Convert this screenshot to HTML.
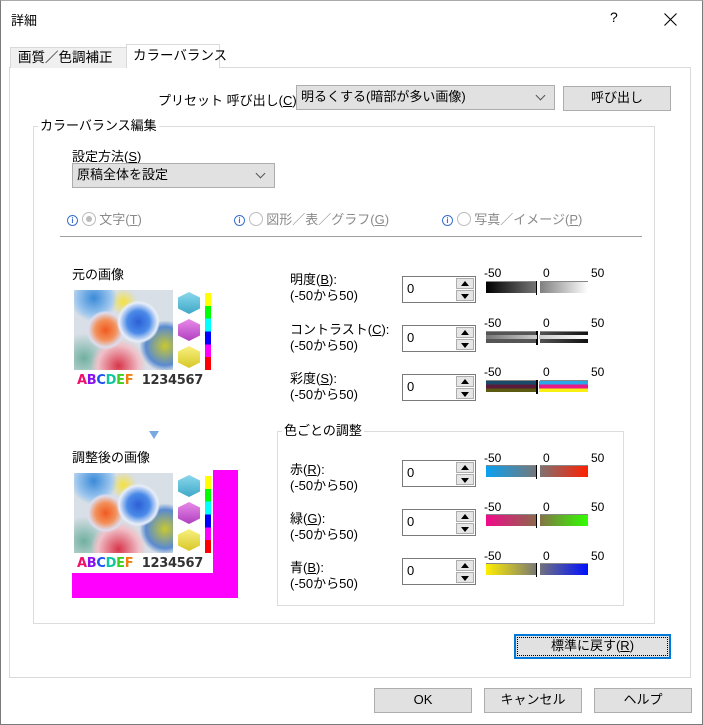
<!DOCTYPE html>
<html><head><meta charset="utf-8"><style>
*{box-sizing:border-box;margin:0;padding:0}
body{width:703px;height:725px;background:#fff;font-family:"Liberation Sans","Noto Sans CJK JP",sans-serif;font-size:13px;color:#000;position:relative;overflow:hidden}
.a{position:absolute;white-space:nowrap}
.btn{position:absolute;background:#e1e1e1;border:1px solid #adadad;text-align:center;line-height:22px;font-size:13px}
.combo{position:absolute;background:#e1e1e1;border:1px solid #adadad;padding-left:4px;line-height:22px}
.combo:after{content:"";position:absolute;right:10px;top:6px;width:6px;height:6px;border-right:1px solid #555;border-bottom:1px solid #555;transform:rotate(45deg)}
.grp{position:absolute;border:1px solid #dcdcdc}
.leg{position:absolute;background:#fff;padding:0 2px;top:-10px;left:4px;line-height:18px}
u{text-decoration:underline}
.spin{position:absolute;width:74px;height:27px;border:1px solid #7a7a7a;background:#fff}
.spin span{position:absolute;left:4px;top:4px;font-size:13px}
.sb{position:absolute;right:1px;width:18px;height:11px;background:#e6e6e6;border:1px solid #adadad}
.up{top:1px}.dn{top:13px}
.up:after,.dn:after{content:"";position:absolute;left:4px;border-left:4px solid transparent;border-right:4px solid transparent}
.up:after{top:2px;border-bottom:5px solid #000}
.dn:after{top:3px;border-top:5px solid #000}
.bar{position:absolute;width:102px;height:12px;border-top:1px solid #888}
.bar:after{content:"";position:absolute;left:50px;top:-1px;width:3px;height:14px;background:#fff;border-left:1px solid #000;border-right:0}
.sc{position:absolute;font-size:12px}
.lbl{position:absolute;line-height:16px;font-size:13px}
.img{position:absolute;width:99px;height:80px;background:
radial-gradient(circle at 65% 40%,#2c5fd6 0,#4a8ae8 14%,#e8eef8 24%,transparent 27%),
radial-gradient(circle at 32% 50%,#f05a20 0,#f3905a 13%,#dde 22%,transparent 25%),
radial-gradient(circle at 45% 95%,#d8354a 0,#f0c0c8 22%,transparent 30%),
radial-gradient(circle at 92% 70%,#c8c830 0,#5a8ad0 18%,transparent 24%),
radial-gradient(circle at 20% 10%,#3a8ad8 0,#9cc6ee 16%,transparent 22%),
radial-gradient(circle at 50% 15%,#f5e040 0,transparent 16%),
radial-gradient(circle at 10% 85%,#70b0a0 0,transparent 22%),
#d8dfe6}
.cube{position:absolute;width:22px;height:22px;clip-path:polygon(50% 0,100% 25%,100% 75%,50% 100%,0 75%,0 25%)}
.strip{position:absolute;width:6px;height:77px;background:linear-gradient(#ff0 0 17%,#0f0 17% 33%,#0ff 33% 50%,#00f 50% 67%,#f0f 67% 83%,#f00 83%)}
.abc{position:absolute;font-weight:bold;font-size:13px;font-family:"DejaVu Sans",sans-serif;letter-spacing:-0.3px}
.gray{color:#8a8a8a}
.info{display:inline-block;width:11px;height:11px;border:1px solid #3a6fd0;border-radius:50%;color:#3a6fd0;font-size:8px;line-height:9px;text-align:center;font-weight:bold;vertical-align:1px}
.radio{display:inline-block;width:14px;height:14px;border:1px solid #bcbcbc;border-radius:50%;vertical-align:-2px;position:relative}
.radio.on:after{content:"";position:absolute;left:3px;top:3px;width:6px;height:6px;border-radius:50%;background:#bcbcbc}
</style></head><body>
<div class="a" style="left:0;top:0;width:703px;height:725px;border:1px solid #7a7a7a;border-top-color:#aaa"></div>
<div class="a" style="left:11px;top:10px;font-size:13px">詳細</div>
<div class="a" style="left:610px;top:9px;font-size:14px">?</div>
<svg class="a" style="left:664px;top:13px" width="13" height="13"><path d="M0.5 0.5L12.5 12.5M12.5 0.5L0.5 12.5" stroke="#000" stroke-width="1.1"/></svg>

<div class="a" style="left:9px;top:67px;width:682px;height:611px;border:1px solid #d9d9d9"></div>
<div class="a" style="left:10px;top:47px;width:117px;height:21px;background:#f0f0f0;border:1px solid #d9d9d9;border-bottom:none;padding-left:7px;line-height:20px;font-size:13.5px">画質／色調補正</div>
<div class="a" style="left:126px;top:44px;width:94px;height:24px;background:#fff;border:1px solid #d9d9d9;border-bottom:none;padding-left:6px;line-height:22px;font-size:13.5px">カラーバランス</div>

<div class="a" style="left:158px;top:90px">プリセット 呼び出し(<u>C</u>)</div>
<div class="combo" style="left:296px;top:85px;width:259px;height:25px">明るくする(暗部が多い画像)</div>
<div class="btn" style="left:563px;top:86px;width:108px;height:25px">呼び出し</div>

<div class="grp" style="left:33px;top:126px;width:622px;height:498px"><div class="leg">カラーバランス編集</div></div>
<div class="a" style="left:72px;top:146px">設定方法(<u>S</u>)</div>
<div class="combo" style="left:72px;top:163px;width:203px;height:25px">原稿全体を設定</div>

<div class="a gray" style="left:67px;top:209px"><span class="info">i</span> <span class="radio on"></span> 文字(<u>T</u>)</div>
<div class="a gray" style="left:234px;top:209px"><span class="info">i</span> <span class="radio"></span> 図形／表／グラフ(<u>G</u>)</div>
<div class="a gray" style="left:442px;top:209px"><span class="info">i</span> <span class="radio"></span> 写真／イメージ(<u>P</u>)</div>
<div class="a" style="left:60px;top:236px;width:582px;height:1px;background:#a0a0a0"></div>

<div class="a" style="left:72px;top:264px">元の画像</div>
<div class="img" style="left:74px;top:290px"></div>
<div class="cube" style="left:178px;top:292px;background:linear-gradient(#8ad8ec,#3fa8c8)"></div>
<div class="cube" style="left:178px;top:319px;background:linear-gradient(#e88ae8,#b040c0)"></div>
<div class="cube" style="left:178px;top:346px;background:linear-gradient(#f8f080,#d8c828)"></div>
<div class="strip" style="left:205px;top:293px"></div>
<div class="abc" style="left:77px;top:373px"><span style="color:#f0106a">A</span><span style="color:#8a10f0">B</span><span style="color:#2050f0">C</span><span style="color:#10c8a0">D</span><span style="color:#40d020">E</span><span style="color:#f08010">F</span><span style="color:#333">&nbsp; 1234567</span></div>

<div class="a" style="left:149px;top:431px;width:0;height:0;border-left:5px solid transparent;border-right:5px solid transparent;border-top:8px solid #7aa8e0"></div>
<div class="a" style="left:72px;top:447px">調整後の画像</div>
<div class="a" style="left:213px;top:470px;width:25px;height:128px;background:#f0f"></div>
<div class="a" style="left:72px;top:573px;width:166px;height:25px;background:#f0f"></div>
<div class="a" style="left:72px;top:470px;width:141px;height:103px;background:#fff"></div>
<div class="img" style="left:74px;top:473px"></div>
<div class="cube" style="left:178px;top:475px;background:linear-gradient(#8ad8ec,#3fa8c8)"></div>
<div class="cube" style="left:178px;top:502px;background:linear-gradient(#e88ae8,#b040c0)"></div>
<div class="cube" style="left:178px;top:529px;background:linear-gradient(#f8f080,#d8c828)"></div>
<div class="strip" style="left:205px;top:476px"></div>
<div class="abc" style="left:77px;top:556px"><span style="color:#f0106a">A</span><span style="color:#8a10f0">B</span><span style="color:#2050f0">C</span><span style="color:#10c8a0">D</span><span style="color:#40d020">E</span><span style="color:#f08010">F</span><span style="color:#333">&nbsp; 1234567</span></div>

<!-- rows -->
<div class="lbl" style="left:290px;top:272px">明度(<u>B</u>):<br>(-50から50)</div>
<div class="spin" style="left:402px;top:276px"><span>0</span><div class="sb up"></div><div class="sb dn"></div></div>
<div class="sc" style="left:484px;top:266px">-50</div><div class="sc" style="left:543px;top:266px">0</div><div class="sc" style="left:591px;top:266px">50</div>
<div class="bar" style="left:486px;top:281px;background:linear-gradient(90deg,#000,#777 50%,#fff)"></div>

<div class="lbl" style="left:290px;top:322px">コントラスト(<u>C</u>):<br>(-50から50)</div>
<div class="spin" style="left:402px;top:325px"><span>0</span><div class="sb up"></div><div class="sb dn"></div></div>
<div class="sc" style="left:484px;top:316px">-50</div><div class="sc" style="left:543px;top:316px">0</div><div class="sc" style="left:591px;top:316px">50</div>
<div class="bar" style="left:486px;top:331px;background:linear-gradient(90deg,#555,#555 50%,#111)"></div>
<div class="a" style="left:486px;top:335px;width:102px;height:4px;background:linear-gradient(90deg,#777,#ccc 50%,#fff)"></div>
<div class="a" style="left:537px;top:331px;width:2px;height:14px;background:#fff;border-left:1px solid #000"></div>

<div class="lbl" style="left:290px;top:371px">彩度(<u>S</u>):<br>(-50から50)</div>
<div class="spin" style="left:402px;top:374px"><span>0</span><div class="sb up"></div><div class="sb dn"></div></div>
<div class="sc" style="left:484px;top:365px">-50</div><div class="sc" style="left:543px;top:365px">0</div><div class="sc" style="left:591px;top:365px">50</div>
<div class="bar" style="left:486px;top:380px;background:linear-gradient(#1a4a6a 0 33%,#5a1a3a 33% 66%,#5a5a10 66%);"></div>
<div class="a" style="left:538px;top:381px;width:50px;height:11px;background:linear-gradient(#2aa8e8 0 33%,#e81a8a 33% 66%,#f8f010 66%)"></div>
<div class="a" style="left:537px;top:380px;width:2px;height:14px;background:#fff;border-left:1px solid #000"></div>

<div class="grp" style="left:277px;top:431px;width:347px;height:175px"><div class="leg">色ごとの調整</div></div>

<div class="lbl" style="left:290px;top:462px">赤(<u>R</u>):<br>(-50から50)</div>
<div class="spin" style="left:402px;top:460px"><span>0</span><div class="sb up"></div><div class="sb dn"></div></div>
<div class="sc" style="left:484px;top:451px">-50</div><div class="sc" style="left:543px;top:451px">0</div><div class="sc" style="left:591px;top:451px">50</div>
<div class="bar" style="left:486px;top:465px;background:linear-gradient(90deg,#0aa0f0,#777 50%,#ff2000)"></div>

<div class="lbl" style="left:290px;top:511px">緑(<u>G</u>):<br>(-50から50)</div>
<div class="spin" style="left:402px;top:509px"><span>0</span><div class="sb up"></div><div class="sb dn"></div></div>
<div class="sc" style="left:484px;top:500px">-50</div><div class="sc" style="left:543px;top:500px">0</div><div class="sc" style="left:591px;top:500px">50</div>
<div class="bar" style="left:486px;top:514px;background:linear-gradient(90deg,#f00a8a,#8a6a4a 50%,#30ff00)"></div>

<div class="lbl" style="left:290px;top:560px">青(<u>B</u>):<br>(-50から50)</div>
<div class="spin" style="left:402px;top:558px"><span>0</span><div class="sb up"></div><div class="sb dn"></div></div>
<div class="sc" style="left:484px;top:549px">-50</div><div class="sc" style="left:543px;top:549px">0</div><div class="sc" style="left:591px;top:549px">50</div>
<div class="bar" style="left:486px;top:563px;background:linear-gradient(90deg,#ffee00,#777 50%,#0010ff)"></div>

<div class="btn" style="left:514px;top:634px;width:157px;height:25px;border:2px solid #0078d7;line-height:20px;outline:1px dotted #000;outline-offset:-4px">標準に戻す(<u>R</u>)</div>

<div class="btn" style="left:374px;top:688px;width:98px;height:25px">OK</div>
<div class="btn" style="left:484px;top:688px;width:98px;height:25px">キャンセル</div>
<div class="btn" style="left:594px;top:688px;width:98px;height:25px">ヘルプ</div>
</body></html>
